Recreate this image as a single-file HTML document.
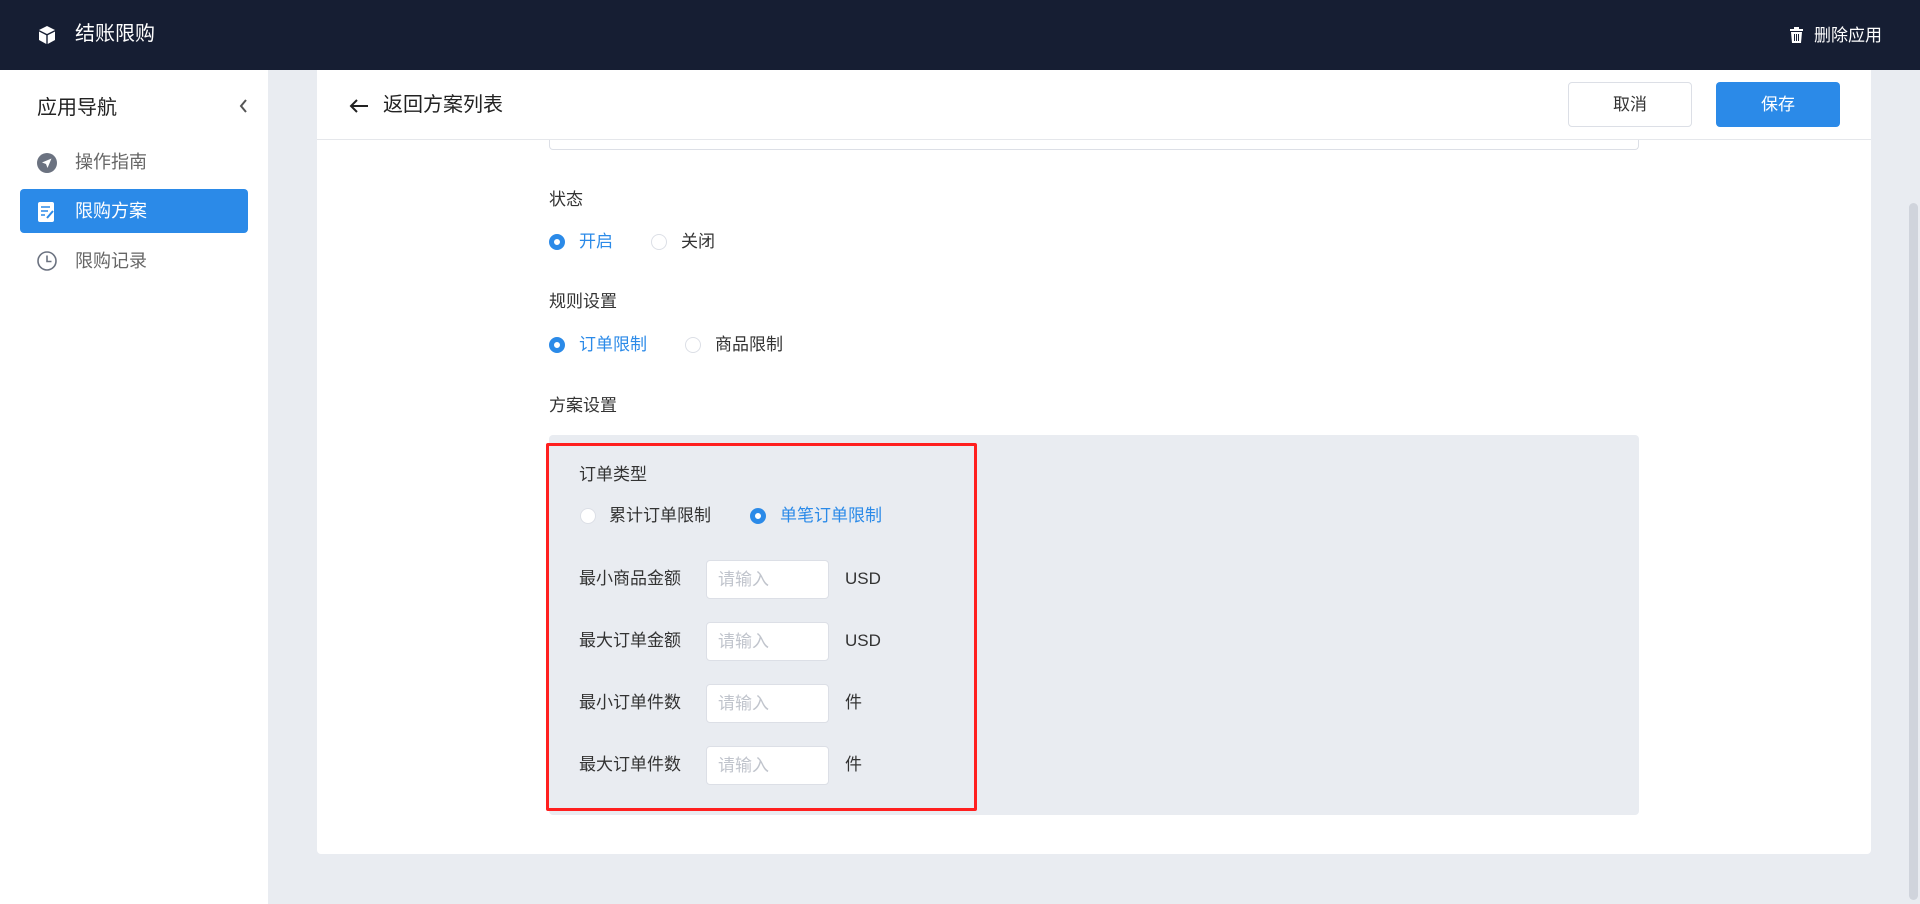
<!DOCTYPE html>
<html><head><meta charset="utf-8"><style>
*{margin:0;padding:0;box-sizing:border-box}
body{width:1920px;height:904px;overflow:hidden;background:#e9ecf1;font-family:"Liberation Sans","Noto Sans CJK SC",sans-serif;color:#333;position:relative;font-size:17px}
.abs{position:absolute}
.hdr{left:0;top:0;width:1920px;height:70px;background:#161e33;color:#fff}
.side{left:0;top:70px;width:268px;height:834px;background:#fff}
.card{left:317px;top:70px;width:1554px;height:784px;background:#fff;border-radius:0 0 4px 4px}
.t{white-space:nowrap;line-height:20px}
.radio{width:16px;height:16px;border-radius:50%;border:1px solid #dcdfe6;background:#fff}
.radio.on{border:5px solid #2b8ae8}
.inp{width:123px;height:39px;background:#fff;border:1px solid #dcdfe6;border-radius:4px;color:#c0c4cc;padding:9px 11px;font-size:17px;line-height:20px}
</style></head><body>
<div class="abs hdr">
  <svg class="abs" style="left:37px;top:25px" width="20" height="20" viewBox="0 0 20 20"><path d="M10 1 L18 5 L10 9 L2 5Z" fill="#fff"/><path d="M2 6.5 L9.3 10.2 V19 L2 15Z" fill="#fff"/><path d="M10.7 10.2 L18 6.5 V15 L10.7 19Z" fill="#fff"/></svg>
  <div class="abs t" style="left:75px;top:24px;font-size:20px">结账限购</div>
  <svg class="abs" style="left:1789px;top:27px" width="15" height="16" viewBox="0 0 15 16"><rect x="1" y="2" width="13" height="2" fill="#fff"/><rect x="5" y="0" width="5" height="2" fill="#fff"/><path d="M2 5 H13 L12 16 H3Z" fill="#fff"/><path d="M5.5 7v7M7.5 7v7M9.5 7v7" stroke="#161e33" stroke-width="1"/></svg>
  <div class="abs t" style="left:1814px;top:26px;font-size:17px">删除应用</div>
</div>
<div class="abs side">
  <div class="abs t" style="left:37px;top:28px;font-size:20px;color:#222">应用导航</div>
  <svg class="abs" style="left:238px;top:28px" width="10" height="16" viewBox="0 0 10 16"><path d="M8 2 L3 8 L8 14" stroke="#555" stroke-width="2" fill="none"/></svg>
  <svg class="abs" style="left:37px;top:83px" width="20" height="20" viewBox="0 0 20 20"><circle cx="10" cy="10" r="10" fill="#6b7280"/><path d="M14.5 5.5 L5 9.5 L9 11 L10.5 15Z" fill="#fff"/></svg>
  <div class="abs t" style="left:75px;top:82px;font-size:18px;color:#666">操作指南</div>
  <div class="abs" style="left:20px;top:119px;width:228px;height:44px;background:#2b8ae8;border-radius:4px"></div>
  <svg class="abs" style="left:38px;top:132px" width="18" height="20" viewBox="0 0 18 20"><rect x="0" y="0" width="16" height="20" rx="2" fill="#fff"/><path d="M3 5h9M3 9h7M3 13h4" stroke="#2b8ae8" stroke-width="1.5"/><path d="M9 16 L15 9" stroke="#2b8ae8" stroke-width="2"/></svg>
  <div class="abs t" style="left:75px;top:131px;font-size:18px;color:#fff">限购方案</div>
  <svg class="abs" style="left:37px;top:181px" width="20" height="20" viewBox="0 0 20 20"><circle cx="10" cy="10" r="9" fill="none" stroke="#6b7280" stroke-width="1.6"/><path d="M10 4.5 V10.5 H14.5" stroke="#6b7280" stroke-width="1.6" fill="none"/></svg>
  <div class="abs t" style="left:75px;top:181px;font-size:18px;color:#666">限购记录</div>
</div>
<div class="abs card">
  <div class="abs" style="left:232px;top:70px;width:1090px;height:10px;border:1px solid #dcdfe6;border-top:none;border-radius:0 0 4px 4px"></div>
  <div class="abs" style="left:0;top:69px;width:1554px;height:1px;background:#e5e7eb"></div>
  <svg class="abs" style="left:32px;top:28px" width="20" height="16" viewBox="0 0 20 16"><path d="M19 8H2M8 2L2 8l6 6" stroke="#222" stroke-width="2" fill="none"/></svg>
  <div class="abs t" style="left:66px;top:25px;font-size:20px;color:#222">返回方案列表</div>
  <div class="abs" style="left:1251px;top:12px;width:124px;height:45px;border:1px solid #dcdfe6;border-radius:4px;text-align:center;line-height:43px;font-size:17px;color:#333">取消</div>
  <div class="abs" style="left:1399px;top:12px;width:124px;height:45px;background:#2b8ae8;border-radius:4px;text-align:center;line-height:45px;font-size:17px;color:#fff">保存</div>
</div>
<div class="abs t" style="left:549px;top:190px">状态</div>
<div class="abs radio on" style="left:549px;top:234px"></div>
<div class="abs t" style="left:579px;top:232px;color:#2b8ae8">开启</div>
<div class="abs radio" style="left:651px;top:234px"></div>
<div class="abs t" style="left:681px;top:232px">关闭</div>
<div class="abs t" style="left:549px;top:292px">规则设置</div>
<div class="abs radio on" style="left:549px;top:337px"></div>
<div class="abs t" style="left:579px;top:335px;color:#2b8ae8">订单限制</div>
<div class="abs radio" style="left:685px;top:337px"></div>
<div class="abs t" style="left:715px;top:335px">商品限制</div>
<div class="abs t" style="left:549px;top:396px">方案设置</div>
<div class="abs" style="left:549px;top:435px;width:1090px;height:380px;background:#e9ecf1;border-radius:4px"></div>
<div class="abs" style="left:546px;top:443px;width:431px;height:368px;border:3px solid #ff1f1f;border-radius:2px"></div>
<div class="abs t" style="left:579px;top:465px">订单类型</div>
<div class="abs radio" style="left:580px;top:508px"></div>
<div class="abs t" style="left:609px;top:506px">累计订单限制</div>
<div class="abs radio on" style="left:750px;top:508px"></div>
<div class="abs t" style="left:780px;top:506px;color:#2b8ae8">单笔订单限制</div>
<div class="abs t" style="left:579px;top:569px">最小商品金额</div>
<div class="abs inp" style="left:706px;top:560px">请输入</div>
<div class="abs t" style="left:845px;top:569px">USD</div>
<div class="abs t" style="left:579px;top:631px">最大订单金额</div>
<div class="abs inp" style="left:706px;top:622px">请输入</div>
<div class="abs t" style="left:845px;top:631px">USD</div>
<div class="abs t" style="left:579px;top:693px">最小订单件数</div>
<div class="abs inp" style="left:706px;top:684px">请输入</div>
<div class="abs t" style="left:845px;top:693px">件</div>
<div class="abs t" style="left:579px;top:755px">最大订单件数</div>
<div class="abs inp" style="left:706px;top:746px">请输入</div>
<div class="abs t" style="left:845px;top:755px">件</div>
<div class="abs" style="left:1909px;top:203px;width:9px;height:697px;background:#d0d4dc;border-radius:5px"></div>
</body></html>
